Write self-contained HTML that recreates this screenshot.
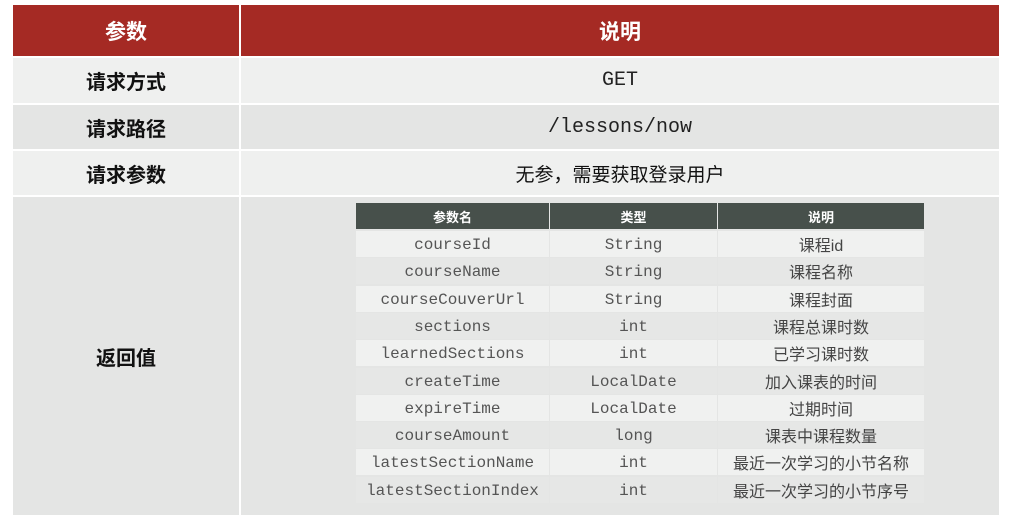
<!DOCTYPE html>
<html><head><meta charset="utf-8"><style>
body{margin:0;width:1013px;height:518px;background:#fff;position:relative;overflow:hidden;font-family:"Liberation Sans","Noto Sans CJK SC",sans-serif}
.c{position:absolute;display:flex;align-items:center;justify-content:center;box-sizing:border-box}
.h{background:#a52a24;color:#fff;font-weight:bold;font-size:21px}
.l{font-weight:bold;font-size:20px;color:#111}
.m{font-family:"Liberation Mono","Noto Sans CJK SC",monospace;font-size:20px;color:#222}
.ih{background:#47504b;color:#fff;font-weight:bold;font-size:13px}
.it{font-size:16px;color:#444}
.mono{font-family:"Liberation Mono","Noto Sans CJK SC",monospace;font-size:16px;color:#555;padding-top:2px}
</style></head><body>
<div class="c h" style="left:13px;top:5px;width:226px;height:51px">参数</div>
<div class="c h" style="left:241px;top:5px;width:758px;height:51px">说明</div>

<div class="c l" style="left:13px;top:58px;width:226px;height:45px;background:#eff0ef">请求方式</div>
<div class="c m" style="left:241px;top:58px;width:758px;height:45px;background:#eff0ef">GET</div>
<div class="c l" style="left:13px;top:105px;width:226px;height:44px;background:#e4e5e4">请求路径</div>
<div class="c m" style="left:241px;top:105px;width:758px;height:44px;background:#e4e5e4">/lessons/now</div>
<div class="c l" style="left:13px;top:151px;width:226px;height:44px;background:#eff0ef">请求参数</div>
<div class="c" style="left:241px;top:151px;width:758px;height:44px;background:#eff0ef;font-size:19px;color:#111">无参，需要获取登录用户</div>
<div class="c l" style="left:13px;top:197px;width:226px;height:318px;background:#e4e5e4">返回值</div>
<div class="c" style="left:241px;top:197px;width:758px;height:318px;background:#e4e5e4"></div>

<div class="c ih" style="left:356px;top:203px;width:193px;height:26px">参数名</div>
<div class="c ih" style="left:550px;top:203px;width:167px;height:26px">类型</div>
<div class="c ih" style="left:718px;top:203px;width:206px;height:26px">说明</div>
<div id="rows"></div>
<script>
var d=[["courseId","String","课程id"],["courseName","String","课程名称"],["courseCouverUrl","String","课程封面"],["sections","int","课程总课时数"],["learnedSections","int","已学习课时数"],["createTime","LocalDate","加入课表的时间"],["expireTime","LocalDate","过期时间"],["courseAmount","long","课表中课程数量"],["latestSectionName","int","最近一次学习的小节名称"],["latestSectionIndex","int","最近一次学习的小节序号"]];
var h="";d.forEach(function(r,i){var y=231+i*27.3,bg=i%2?"#e6e7e6":"#f0f1f0";
h+='<div class="c mono" style="left:356px;top:'+y+'px;width:193px;height:26px;background:'+bg+'">'+r[0]+'</div>';
h+='<div class="c mono" style="left:550px;top:'+y+'px;width:167px;height:26px;background:'+bg+'">'+r[1]+'</div>';
h+='<div class="c it" style="left:718px;top:'+y+'px;width:206px;height:26px;background:'+bg+'">'+r[2]+'</div>';});
document.getElementById("rows").innerHTML=h;
</script>
</body></html>
